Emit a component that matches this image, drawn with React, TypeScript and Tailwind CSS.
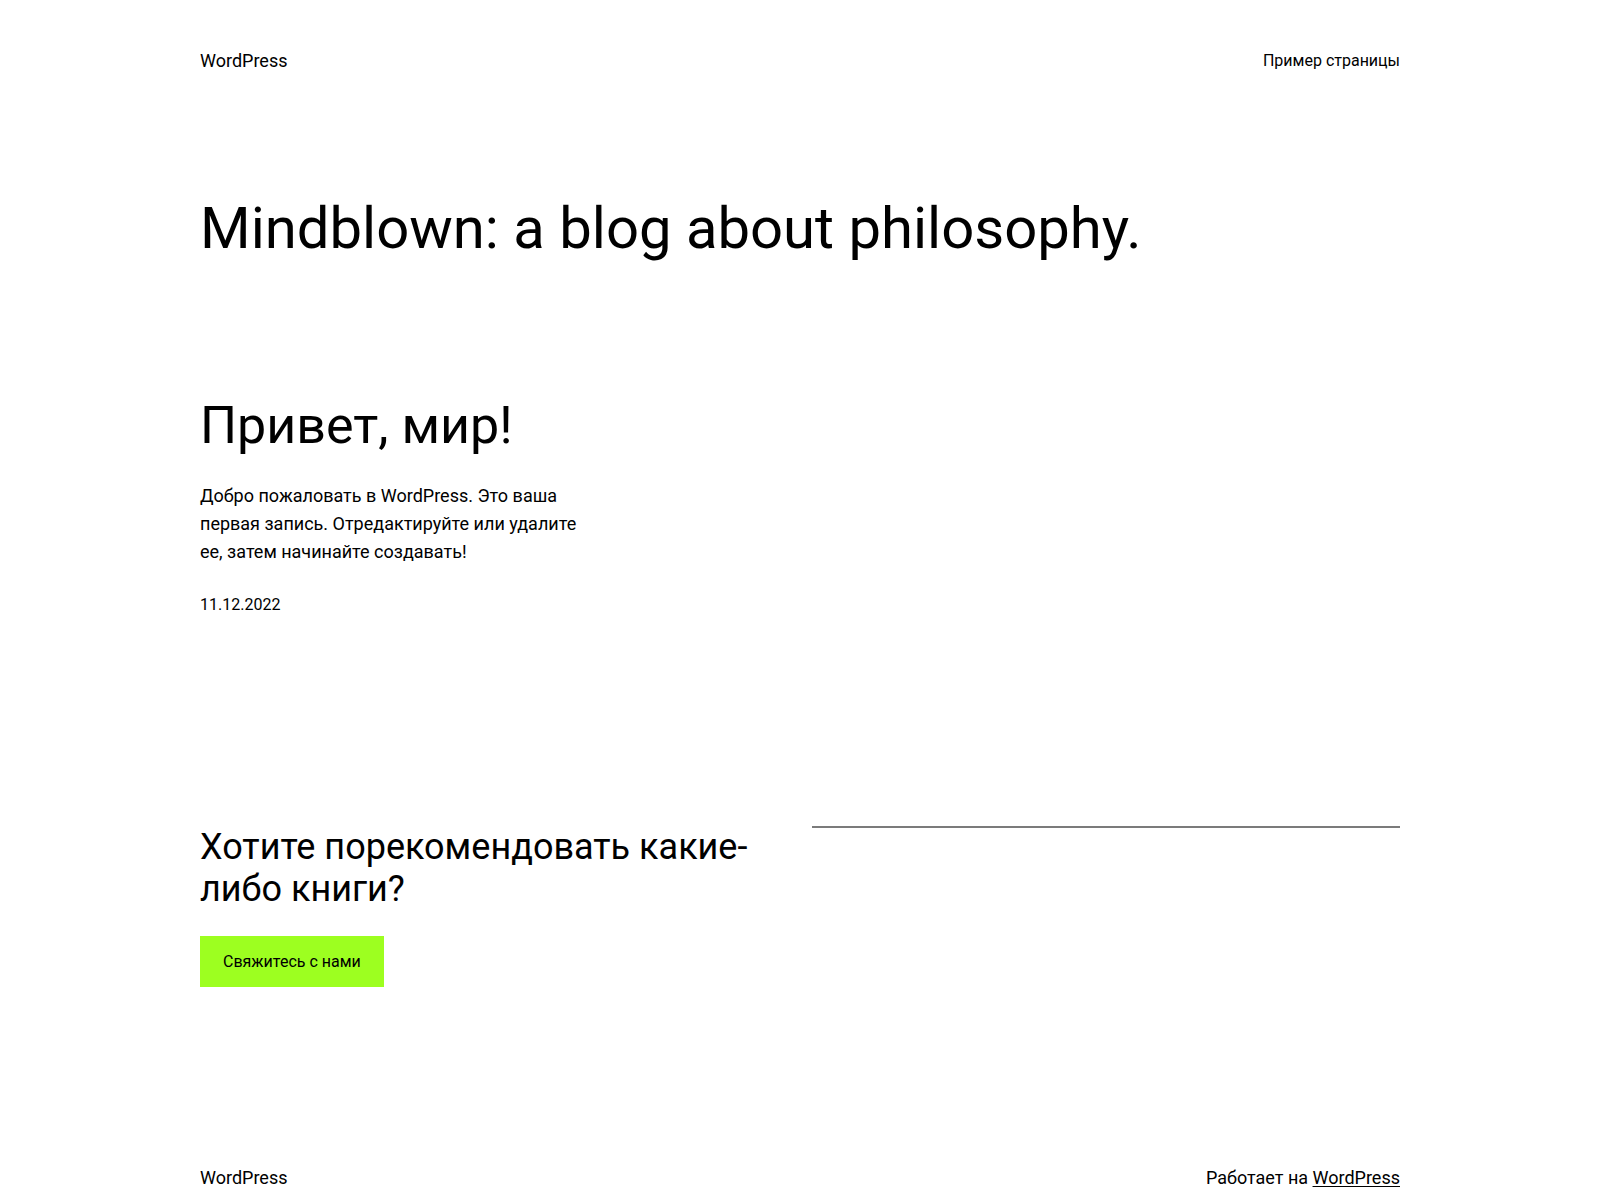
export default function App() {
  return (
    <div className="min-h-screen bg-white text-black" style={{ fontFamily: "Roboto, 'Liberation Sans', sans-serif" }}>
      <div className="mx-auto w-[1200px]">
        <header className="flex items-center justify-between pt-[47px] leading-[27.7px]">
          <a href="#" className="text-[18px] text-black">WordPress</a>
          <nav>
            <a href="#" className="text-[16px] text-black">Пример страницы</a>
          </nav>
        </header>

        <h1 className="mt-[119px] text-[58px] leading-[68.4px] font-normal">
          Mindblown: a blog about philosophy.
        </h1>

        <article className="mt-[135px] w-[390px]">
          <h2 className="text-[52px] leading-[58.8px] font-normal">
            <a href="#">Привет, мир!</a>
          </h2>
          <p className="mt-[26px] text-[18px] leading-[28px]">
            Добро пожаловать в WordPress. Это ваша первая запись. Отредактируйте или удалите ее, затем начинайте создавать!
          </p>
          <time className="mt-[26px] block text-[16px] leading-[1.6]">11.12.2022</time>
        </article>

        <section className="mt-[208px] grid grid-cols-2 gap-6">
          <div>
            <h2 className="text-[36px] leading-[42px] font-normal">
              Хотите порекомендовать какие-либо книги?
            </h2>
            <a
              href="#"
              className="mt-[26px] inline-block bg-[#9dff20] px-[23px] py-[13px] text-[16px] leading-[1.6] text-black"
            >
              Свяжитесь с нами
            </a>
          </div>
          <div>
            <hr className="h-[2px] border-0 bg-[#7b7b7b]" />
          </div>
        </section>

        <footer className="mt-[177px] flex items-center justify-between pb-[60px] text-[18px] leading-[27.7px]">
          <a href="#">WordPress</a>
          <p>
            Работает на <a href="#" className="underline underline-offset-2">WordPress</a>
          </p>
        </footer>
      </div>
    </div>
  )
}
